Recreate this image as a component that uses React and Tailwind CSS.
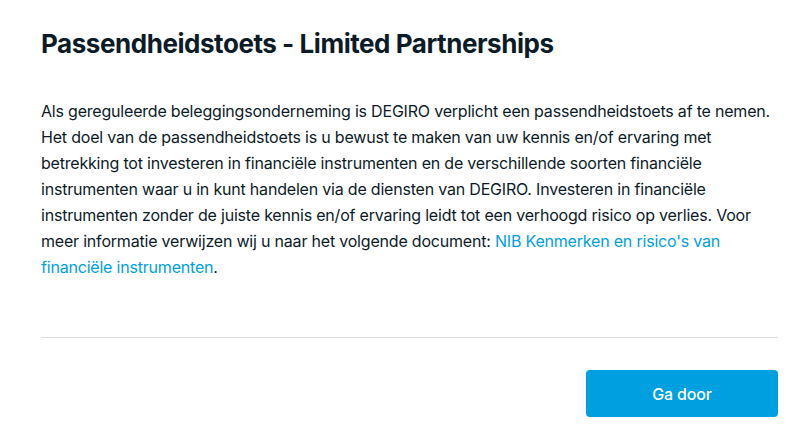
export default function App() {
  return (
    <div className="w-[802px] h-[438px] bg-white pl-[41px] pr-[24px] pt-[26px]" style={{ fontFamily: "Inter, 'Liberation Sans', sans-serif" }}>
      <h1 className="text-[26px] leading-[36px] font-bold text-[#0c1b28] tracking-[-0.45px]">
        Passendheidstoets - Limited Partnerships
      </h1>
      <p className="mt-[36px] text-[16px] leading-[26px] text-[#0c1b28] tracking-[-0.2px]">
        Als gereguleerde beleggingsonderneming is DEGIRO verplicht een passendheidstoets af te nemen. Het doel van de passendheidstoets is u bewust te maken van uw kennis en/of ervaring met betrekking tot investeren in financiële instrumenten en de verschillende soorten financiële instrumenten waar u in kunt handelen via de diensten van DEGIRO. Investeren in financiële instrumenten zonder de juiste kennis en/of ervaring leidt tot een verhoogd risico op verlies. Voor meer informatie verwijzen wij u naar het volgende document:{" "}
        <a className="text-[#009fdf]" href="#">NIB Kenmerken en risico's van financiële instrumenten</a>.
      </p>
      <div className="mt-[57px] h-px bg-[#dbe1e5]" />
      <div className="flex justify-end mt-[32px]">
        <button className="w-[192px] h-[47px] rounded-[4px] bg-[#009fdf] text-white text-[16px] font-medium tracking-[-0.2px]">
          Ga door
        </button>
      </div>
    </div>
  );
}
